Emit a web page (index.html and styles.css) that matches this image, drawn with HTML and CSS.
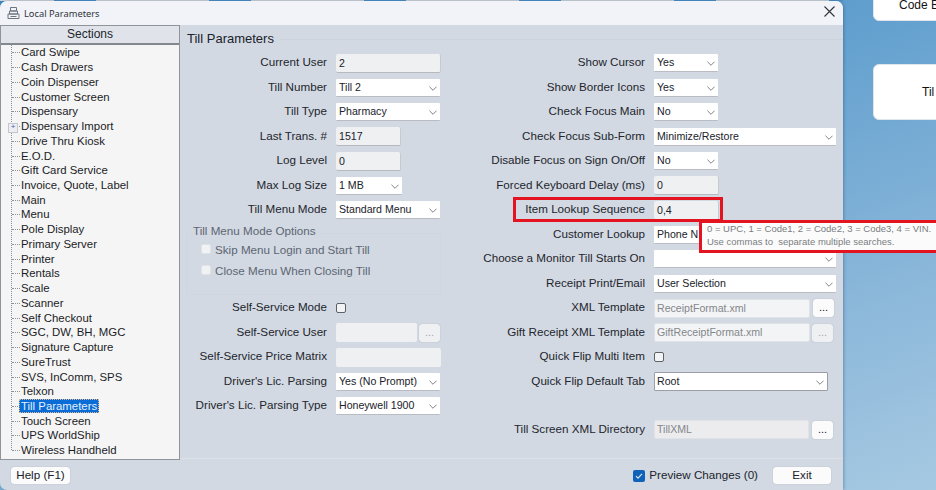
FILE: index.html
```html
<!DOCTYPE html>
<html lang="en">
<head>
<meta charset="utf-8">
<title>Local Parameters</title>
<link rel="stylesheet" href="styles.css">
</head>
<body>
<svg class="defs" width="0" height="0" aria-hidden="true"><symbol id="chev" viewBox="0 0 9 5"><path d="M.5.5l4 4 4-4" fill="none" stroke="#6f747b" stroke-width="1"/></symbol></svg>
<div class="desktop">
  <div class="strip"></div>
  <div class="card card-top">Code B</div>
  <div class="card card-till">Til</div>
  <div class="window">
    <header class="titlebar">
      <svg class="appicon" width="13" height="14" viewBox="0 0 13 14"><path d="M3.5 1.5h6v3.5h-6zM2.5 5h8v3h-8zM1 8h11v4.5H1zM3.5 10.5h6" fill="none" stroke="#6d747d" stroke-width="1"/></svg>
      <span class="wintitle">Local Parameters</span>
      <svg class="close" width="11" height="11" viewBox="0 0 11 11"><path d="M.5.5l10 10M10.5.5l-10 10" stroke="#30343a" stroke-width="1.1"/></svg>
    </header>
    <div class="body">
      <aside class="sidebar">
        <div class="sections">Sections</div>
        <ul class="tree">
          <li>Card Swipe</li><li>Cash Drawers</li><li>Coin Dispenser</li><li>Customer Screen</li><li>Dispensary</li>
          <li class="expand">Dispensary Import</li><li>Drive Thru Kiosk</li><li>E.O.D.</li><li>Gift Card Service</li>
          <li>Invoice, Quote, Label</li><li>Main</li><li>Menu</li><li>Pole Display</li><li>Primary Server</li><li>Printer</li>
          <li>Rentals</li><li>Scale</li><li>Scanner</li><li>Self Checkout</li><li>SGC, DW, BH, MGC</li><li>Signature Capture</li>
          <li>SureTrust</li><li>SVS, InComm, SPS</li><li>Telxon</li><li class="selected"><span>Till Parameters</span></li>
          <li>Touch Screen</li><li>UPS WorldShip</li><li>Wireless Handheld</li>
        </ul>
      </aside>
      <main class="panel">
        <h1 class="heading">Till Parameters</h1>
        <div class="form">
          <section class="col col-left">
            <div class="row"><label>Current User</label><div class="input w105">2</div></div>
            <div class="row"><label>Till Number</label><div class="select w104">Till 2<svg class="chev"><use href="#chev"/></svg></div></div>
            <div class="row"><label>Till Type</label><div class="select w104">Pharmacy<svg class="chev"><use href="#chev"/></svg></div></div>
            <div class="row"><label>Last Trans. #</label><div class="input w65">1517</div></div>
            <div class="row"><label>Log Level</label><div class="input w65">0</div></div>
            <div class="row"><label>Max Log Size</label><div class="select w66">1 MB<svg class="chev"><use href="#chev"/></svg></div></div>
            <div class="row"><label>Till Menu Mode</label><div class="select w104">Standard Menu<svg class="chev"><use href="#chev"/></svg></div></div>
            <div class="group">
              <div class="legend">Till Menu Mode Options</div>
              <div class="check-row"><span class="box off"></span>Skip Menu Login and Start Till</div>
              <div class="check-row"><span class="box off"></span>Close Menu When Closing Till</div>
            </div>
            <div class="row"><label>Self-Service Mode</label><span class="box"></span></div>
            <div class="row"><label>Self-Service User</label><div class="input off w80"></div><div class="btn dots off">...</div></div>
            <div class="row"><label>Self-Service Price Matrix</label><div class="input off w105"></div></div>
            <div class="row"><label>Driver's Lic. Parsing</label><div class="select w104">Yes (No Prompt)<svg class="chev"><use href="#chev"/></svg></div></div>
            <div class="row"><label>Driver's Lic. Parsing Type</label><div class="select w104">Honeywell 1900<svg class="chev"><use href="#chev"/></svg></div></div>
          </section>
          <section class="col col-right">
            <div class="row"><label>Show Cursor</label><div class="select w64">Yes<svg class="chev"><use href="#chev"/></svg></div></div>
            <div class="row"><label>Show Border Icons</label><div class="select w64">Yes<svg class="chev"><use href="#chev"/></svg></div></div>
            <div class="row"><label>Check Focus Main</label><div class="select w64">No<svg class="chev"><use href="#chev"/></svg></div></div>
            <div class="row"><label>Check Focus Sub-Form</label><div class="select w182">Minimize/Restore<svg class="chev"><use href="#chev"/></svg></div></div>
            <div class="row"><label>Disable Focus on Sign On/Off</label><div class="select w64">No<svg class="chev"><use href="#chev"/></svg></div></div>
            <div class="row"><label>Forced Keyboard Delay (ms)</label><div class="input w65">0</div></div>
            <div class="row"><label>Item Lookup Sequence</label><div class="input w65">0,4</div></div>
            <div class="row"><label>Customer Lookup</label><div class="select w182">Phone N<svg class="chev"><use href="#chev"/></svg></div></div>
            <div class="row"><label>Choose a Monitor Till Starts On</label><div class="select w182"><svg class="chev"><use href="#chev"/></svg></div></div>
            <div class="row"><label>Receipt Print/Email</label><div class="select w182">User Selection<svg class="chev"><use href="#chev"/></svg></div></div>
            <div class="row"><label>XML Template</label><div class="input ro w156">ReceiptFormat.xml</div><div class="btn dots">...</div></div>
            <div class="row"><label>Gift Receipt XML Template</label><div class="input ro w156">GiftReceiptFormat.xml</div><div class="btn dots off">...</div></div>
            <div class="row"><label>Quick Flip Multi Item</label><span class="box"></span></div>
            <div class="row"><label>Quick Flip Default Tab</label><div class="select w174 focus">Root<svg class="chev"><use href="#chev"/></svg></div></div>
            <div class="row spaced"><label>Till Screen XML Directory</label><div class="input ro dim w155">TillXML</div><div class="btn dots">...</div></div>
          </section>
        </div>
      </main>
    </div>
    <footer class="footer">
      <div class="btn help">Help (F1)</div>
      <div class="preview">
        <svg class="checked" width="12" height="12" viewBox="0 0 12 12"><rect width="12" height="12" rx="2" fill="#0f62b8"/><path d="M3 6.2l2 2 4-4.4" fill="none" stroke="#dbe8f6" stroke-width="1.1"/></svg>
        <span class="preview-text">Preview Changes (0)</span>
      </div>
      <div class="btn exit">Exit</div>
    </footer>
  </div>
  <div class="mark mark-seq"></div>
  <div class="tooltip">0 = UPC, 1 = Code1, 2 = Code2, 3 = Code3, 4 = VIN.<br>Use commas to&nbsp; separate multiple searches.</div>
</div>
</body>
</html>
```
FILE: styles.css
```css
* { box-sizing: border-box; }
html, body { margin: 0; height: 100%; overflow: hidden; }
body { font-family: "Liberation Sans", Arial, sans-serif; font-size: 11.65px; color: #20222a; }
.defs { position: absolute; }
.desktop {
  position: relative; width: 936px; height: 490px; overflow: hidden;
  background: linear-gradient(160deg, #3a86c2 0%, #5c9ccd 35%, #8cb8da 75%, #a6c9e2 100%);
}
.strip {
  position: absolute; left: 0; top: 0; width: 843px; height: 1px;
  background: repeating-linear-gradient(90deg, #cfd3d8 0, #cfd3d8 54px, #4a8ec6 54px, #4a8ec6 96px, #cfd3d8 96px, #cfd3d8 155px);
}
.card { position: absolute; left: 873px; width: 90px; background: #fff; border: 1px solid #dfe5ea; border-radius: 6px; color: #111; font-size: 12px; }
.card-top { top: -20px; height: 41px; padding-top: 17px; padding-left: 25px; }
.card-till { top: 64px; height: 56px; padding-top: 20px; padding-left: 48px; }

.window {
  position: absolute; left: 0; top: 1px; width: 843px; height: 489px;
  display: flex; flex-direction: column;
  background: #d2d9e3; border-radius: 7px 7px 0 7px;
  box-shadow: 1px 0 3px rgba(30, 60, 90, .35);
  overflow: hidden;
}
.titlebar { height: 24px; flex: none; display: flex; align-items: center; padding: 0 8px 0 7px; background: #f1f3f9; }
.appicon { flex: none; }
.wintitle { margin-left: 4px; font-family: "Noto Sans", sans-serif; font-size: 9.3px; color: #30343a; }
.close { margin-left: auto; margin-top: -4px; }

.body { flex: none; height: 434px; display: flex; border-bottom: 1px solid #dde1e6; }
.sidebar { flex: none; width: 180px; height: 435px; display: flex; flex-direction: column; background: #f5f5f5; border: 1px solid #8f949b; }
.sections { height: 19px; flex: none; text-align: center; line-height: 17px; font-size: 12px; background: #e0e4ea; border-bottom: 2px solid #83888f; color: #22252b; }
.tree { list-style: none; margin: 0; padding: .4px 0 0; flex: 1; position: relative; font-size: 11.4px; }
.tree::before { content: ""; position: absolute; left: 10px; top: 0; height: 405px; border-left: 1px dotted #8d9299; }
.tree li { height: 14.74px; line-height: 14.74px; padding-left: 20px; position: relative; white-space: nowrap; color: #1a1c26; }
.tree li::before { content: ""; position: absolute; left: 11px; top: 7px; width: 8px; border-top: 1px dotted #8d9299; }
.tree li.expand::after { content: "+"; position: absolute; left: 7px; top: 4px; width: 8px; height: 8px; line-height: 6px; text-align: center; font-size: 8px; color: #4a59b5; background: #eceef4; border: 1px solid #c3c8cf; }
.tree li.selected span { display: inline-block; height: 14px; line-height: 12px; margin-left: -2px; padding: 0 1px; background: #0a6cd6; color: #e8f2fc; border: 1px dotted #e2b98a; }

.panel { flex: 1; padding: 5px 0 0 7px; min-width: 0; }
.heading { margin: 0; font-size: 13px; font-weight: 400; line-height: 18px; color: #20222a; display: flex; align-items: center; gap: 6px; }
.heading::after { content: ""; flex: 1; border-top: 1px solid #ccd3dd; }
.form { display: flex; margin-top: 3px; margin-left: -1px; }
.col { display: flex; flex-direction: column; }
.col-left { width: 264px; --label: 141px; }
.col-right { --label: 195px; }
.row { height: 24.5px; display: flex; align-items: center; flex: none; }
.row.spaced { margin-top: 23.5px; }
.row label { flex: none; width: var(--label); margin-right: 9px; margin-bottom: 3px; text-align: right; white-space: nowrap; color: #23252c; }
.input, .select {
  line-height: 18px; padding-left: 3px; font-size: 10.6px; flex: none; white-space: nowrap; overflow: hidden; color: #20222a;
}
.input { height: 19px; background: #eef0f2; border-bottom: 1px solid #b6babf; border-right: 1px solid #c6cace; border-radius: 2px; }
.input.off { background: #eff0f2; border: none; }
.input.ro { background: #f3f4f5; color: #84878c; border: 1px solid #dfe2e6; line-height: 17px; padding-left: 2px; }
.input.dim { background: #ececee; }
.select { position: relative; height: 18px; line-height: 17px; background: #fff; border-bottom: 1px solid #b9bdc3; border-radius: 1px; }
.select.focus { height: 19px; border: 1px solid #9b9fa5; line-height: 17px; padding-left: 2px; }
.chev { position: absolute; right: 3px; top: 7px; width: 8px; height: 5px; }
.w64 { width: 64px; } .w65 { width: 65px; } .w66 { width: 66px; } .w80 { width: 81px; }
.w104 { width: 104px; } .w105 { width: 105px; } .w155 { width: 155px; } .w156 { width: 156px; }
.w174 { width: 174px; } .w182 { width: 182px; }
.btn { background: #fbfbfc; border-radius: 3px; text-align: center; box-shadow: 0 0 1px rgba(90, 100, 110, .5); color: #20222a; }
.btn.dots { width: 21px; height: 18px; line-height: 17px; margin-left: 3px; font-size: 11px; flex: none; }
.btn.off { background: #eff0f2; color: #a4a7ac; margin-left: 2px; }
.box { display: inline-block; flex: none; width: 10px; height: 10px; border: 1px solid #5e6268; border-radius: 2px; background: #f2f3f5; }
.box.off { border-color: #dfe2e6; background: #f1f2f4; }
.group { width: 255px; height: 73.5px; position: relative; flex: none; color: #5d6672; }
.group::before { content: ""; position: absolute; left: 0; right: 0; top: 10px; height: 60px; border: 1px solid #cfd6e0; }
.legend { position: relative; height: 15px; line-height: 14px; padding-left: 7px; margin-top: 1px; }
.check-row { position: relative; height: 21px; line-height: 19px; display: flex; align-items: center; padding-left: 15px; gap: 4px; }

.footer { flex: 1; display: flex; align-items: flex-start; padding-top: 8px; position: relative; }
.help { width: 59px; height: 17px; line-height: 15px; margin-left: 11px; }
.preview { margin-left: auto; display: flex; align-items: center; gap: 4px; height: 17px; color: #20222a; }
.preview-text { line-height: 15px; margin-bottom: 2px; }
.exit { width: 58px; height: 17px; line-height: 15px; margin-left: 15px; margin-right: 12px; }

.mark { position: absolute; border: 3px solid #e3131f; }
.mark-seq { left: 513px; top: 197px; width: 210px; height: 25px; }
.tooltip {
  position: absolute; left: 699px; top: 220px; width: 240px; height: 33px; padding: 0 0 0 5px;
  background: #fbfbfb; border: 3px solid #e3131f; color: #7a7d82; font-size: 9.5px; line-height: 12.5px; white-space: nowrap;
}
```
